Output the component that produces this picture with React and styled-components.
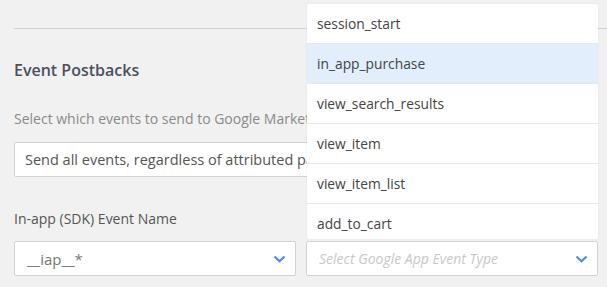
import React from 'react'
import styled, { createGlobalStyle } from 'styled-components'

const GlobalStyle = createGlobalStyle`
  html, body {
    margin: 0;
    padding: 0;
    background: #f1f1f1;
    font-family: 'Open Sans', 'Liberation Sans', sans-serif;
  }
`

const options = [
  'session_start',
  'in_app_purchase',
  'view_search_results',
  'view_item',
  'view_item_list',
  'add_to_cart',
]

function Chevron() {
  return (
    <svg width="13" height="8" viewBox="0 0 13 8">
      <path d="M1.5 1.5 L6.5 6.2 L11.5 1.5" fill="none" stroke="#4a8ee0" strokeWidth="2.2" />
    </svg>
  )
}

function App() {
  return (
    <>
      <GlobalStyle />
      <Page>
        <Divider />
        <Heading>Event Postbacks</Heading>
        <Description>Select which events to send to Google Marketing Platform</Description>
        <Select>Send all events, regardless of attributed partner</Select>
        <Label>In-app (SDK) Event Name</Label>
        <Row>
          <Field>
            <Value>__iap__*</Value>
            <Chevron />
          </Field>
          <FieldWrap>
            <Menu>
              {options.map((o, i) => (
                <Option key={o} active={i === 1}>
                  {o}
                </Option>
              ))}
            </Menu>
            <Field>
              <Placeholder>Select Google App Event Type</Placeholder>
              <Chevron />
            </Field>
          </FieldWrap>
        </Row>
      </Page>
    </>
  )
}

export default App

const Page = styled.div`
  width: 607px;
  height: 287px;
  box-sizing: border-box;
  padding: 28px 9px 0 14px;
  overflow: hidden;
`

const Divider = styled.div`
  height: 1px;
  background: #cfcfcf;
  margin-right: -9px;
`

const Heading = styled.div`
  margin-top: 30px;
  font-size: 16px;
  line-height: 22px;
  font-weight: 600;
  color: #4b5060;
`

const Description = styled.div`
  margin-top: 28px;
  font-size: 14px;
  line-height: 20px;
  color: #8a8a8a;
  white-space: nowrap;
`

const Select = styled.div`
  margin-top: 13px;
  height: 35px;
  box-sizing: border-box;
  border: 1px solid #d2d2d2;
  border-radius: 2px;
  background: #fff;
  padding: 0 10px;
  display: flex;
  align-items: center;
  font-size: 14.5px;
  color: #555;
  white-space: nowrap;
  overflow: hidden;
`

const Label = styled.div`
  margin-top: 32px;
  font-size: 14px;
  line-height: 20px;
  color: #555;
`

const Row = styled.div`
  margin-top: 12px;
  display: grid;
  grid-template-columns: 282px 292px;
  column-gap: 10px;
`

const FieldWrap = styled.div`
  position: relative;
`

const Field = styled.div`
  height: 35px;
  box-sizing: border-box;
  border: 1px solid #d2d2d2;
  border-radius: 2px;
  background: #fff;
  display: flex;
  align-items: center;
  justify-content: space-between;
  padding: 0 9px 0 12px;
`

const Value = styled.span`
  font-size: 15px;
  color: #777;
`

const Placeholder = styled.span`
  font-size: 14px;
  font-style: italic;
  color: #c8c8c8;
`

const Menu = styled.div`
  position: absolute;
  left: 1px;
  bottom: calc(100% + 2px);
  width: 291px;
  height: 235px;
  overflow: hidden;
  background: #fff;
  border-radius: 3px;
  box-shadow: 0 0 2px rgba(0, 0, 0, 0.08);
  z-index: 2;
`

const Option = styled.div`
  height: 40px;
  box-sizing: border-box;
  border-bottom: 1px solid #e8e8e8;
  padding: 0 10px;
  display: flex;
  align-items: center;
  font-size: 13.8px;
  color: #444;
  background: ${(p) => (p.active ? '#e2eefc' : '#fff')};
`
